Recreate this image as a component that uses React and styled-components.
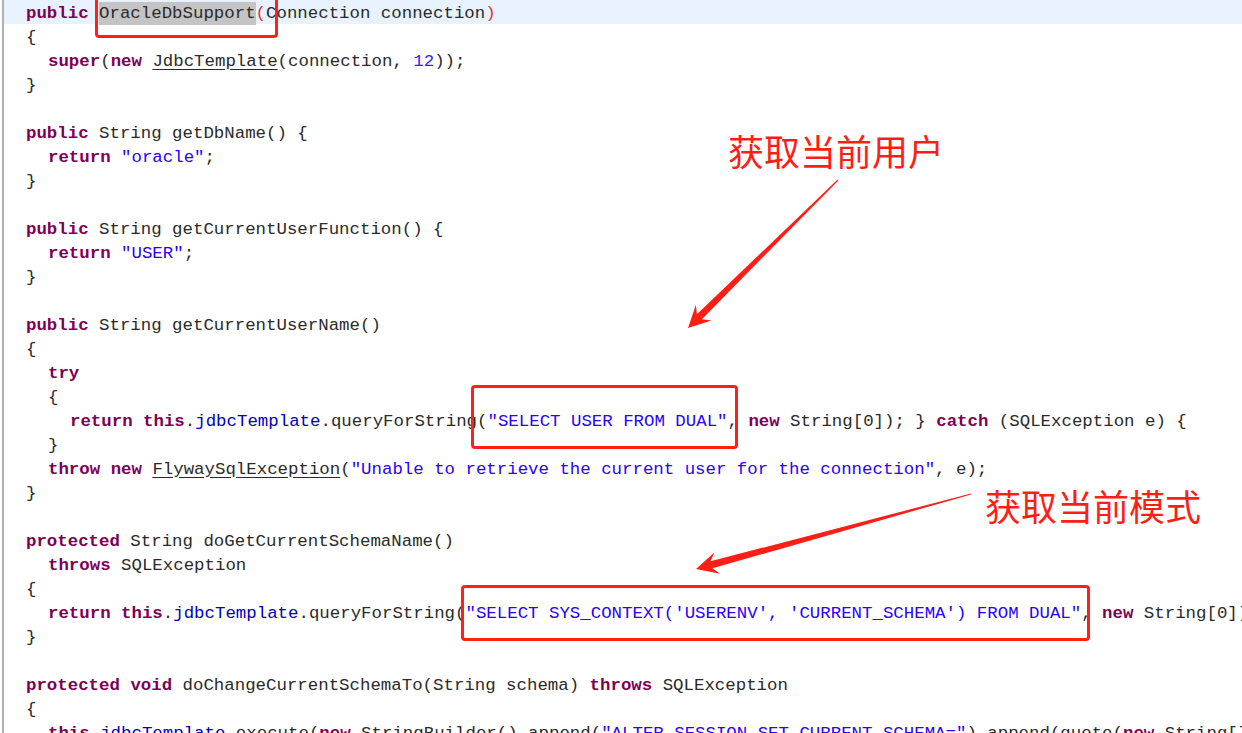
import React from "react";
import styled, { createGlobalStyle, css } from "styled-components";

const GlobalStyle = createGlobalStyle`
  html, body {
    margin: 0;
    padding: 0;
    background: #ffffff;
  }
`;

// each line: indent level + list of [kind, text]
const lines = [
  { i: 0, active: true, t: [["k", "public"], ["p", " "], ["m", "OracleDbSupport"], ["b", "("], ["p", "Connection connection"], ["b", ")"]] },
  { i: 0, t: [["p", "{"]] },
  { i: 1, t: [["k", "super"], ["p", "("], ["k", "new"], ["p", " "], ["u", "JdbcTemplate"], ["p", "(connection, "], ["n", "12"], ["p", "));"]] },
  { i: 0, t: [["p", "}"]] },
  { i: 0, t: [] },
  { i: 0, t: [["k", "public"], ["p", " String getDbName() {"]] },
  { i: 1, t: [["k", "return"], ["p", " "], ["s", "\"oracle\""], ["p", ";"]] },
  { i: 0, t: [["p", "}"]] },
  { i: 0, t: [] },
  { i: 0, t: [["k", "public"], ["p", " String getCurrentUserFunction() {"]] },
  { i: 1, t: [["k", "return"], ["p", " "], ["s", "\"USER\""], ["p", ";"]] },
  { i: 0, t: [["p", "}"]] },
  { i: 0, t: [] },
  { i: 0, t: [["k", "public"], ["p", " String getCurrentUserName()"]] },
  { i: 0, t: [["p", "{"]] },
  { i: 1, t: [["k", "try"]] },
  { i: 1, t: [["p", "{"]] },
  { i: 2, t: [["k", "return"], ["p", " "], ["k", "this"], ["p", "."], ["f", "jdbcTemplate"], ["p", ".queryForString("], ["s", "\"SELECT USER FROM DUAL\""], ["p", ", "], ["k", "new"], ["p", " String[0]); } "], ["k", "catch"], ["p", " (SQLException e) {"]] },
  { i: 1, t: [["p", "}"]] },
  { i: 1, t: [["k", "throw"], ["p", " "], ["k", "new"], ["p", " "], ["u", "FlywaySqlException"], ["p", "("], ["s", "\"Unable to retrieve the current user for the connection\""], ["p", ", e);"]] },
  { i: 0, t: [["p", "}"]] },
  { i: 0, t: [] },
  { i: 0, t: [["k", "protected"], ["p", " String doGetCurrentSchemaName()"]] },
  { i: 1, t: [["k", "throws"], ["p", " SQLException"]] },
  { i: 0, t: [["p", "{"]] },
  { i: 1, t: [["k", "return"], ["p", " "], ["k", "this"], ["p", "."], ["f", "jdbcTemplate"], ["p", ".queryForString("], ["s", "\"SELECT SYS_CONTEXT('USERENV', 'CURRENT_SCHEMA') FROM DUAL\""], ["p", ", "], ["k", "new"], ["p", " String[0]);"]] },
  { i: 0, t: [["p", "}"]] },
  { i: 0, t: [] },
  { i: 0, t: [["k", "protected"], ["p", " "], ["k", "void"], ["p", " doChangeCurrentSchemaTo(String schema) "], ["k", "throws"], ["p", " SQLException"]] },
  { i: 0, t: [["p", "{"]] },
  { i: 1, t: [["k", "this"], ["p", "."], ["f", "jdbcTemplate"], ["p", ".execute("], ["k", "new"], ["p", " StringBuilder().append("], ["s", "\"ALTER SESSION SET CURRENT_SCHEMA=\""], ["p", ").append(quote("], ["k", "new"], ["p", " String[]{schema}))"]] },
];

const boxes = [
  { x: 95, y: -6, w: 183, h: 44 },
  { x: 471, y: 385, w: 267, h: 64 },
  { x: 461, y: 585, w: 629, h: 56 },
];

const notes = [
  { x: 728, y: 127, text: "获取当前用户" },
  { x: 985, y: 482, text: "获取当前模式" },
];

const arrows = [
  { from: [838, 180], to: [688, 328] },
  { from: [971, 494], to: [696, 569] },
];

const Editor = styled.div`
  position: relative;
  width: 1242px;
  height: 733px;
  overflow: hidden;
  box-sizing: border-box;
  border-left: 2px solid #b0b0b0;
  margin-left: 2px;
  background: #ffffff;
`;

const Code = styled.div`
  display: flex;
  flex-direction: column;
  font-family: "Liberation Mono", "Courier New", monospace;
  font-size: 17.4px;
  color: #2a2a2a;
`;

const Line = styled.div`
  height: 24px;
  line-height: 28px;
  white-space: pre;
  padding-left: ${(p) => 22 + p.$indent * 22}px;
  background: ${(p) => (p.$active ? "#e8f2fe" : "transparent")};
`;

const Token = styled.span`
  ${(p) =>
    p.$kind === "k" &&
    css`
      color: #7f0055;
      font-weight: bold;
    `}
  ${(p) => p.$kind === "s" && css`color: #2a00ff;`}
  ${(p) => p.$kind === "n" && css`color: #3a1cff;`}
  ${(p) => p.$kind === "f" && css`color: #0000c0;`}
  ${(p) =>
    p.$kind === "u" &&
    css`
      text-decoration: underline;
      text-underline-offset: 3px;
    `}
  ${(p) =>
    p.$kind === "m" &&
    css`
      background: #c4c4c4;
      padding: 2px 0;
    `}
  ${(p) => p.$kind === "b" && css`color: #e83030;`}
`;

const Callout = styled.div`
  position: absolute;
  left: ${(p) => p.$x}px;
  top: ${(p) => p.$y}px;
  width: ${(p) => p.$w}px;
  height: ${(p) => p.$h}px;
  box-sizing: border-box;
  border: 3px solid #ff2118;
  border-radius: 4px;
`;

const Note = styled.div`
  position: absolute;
  left: ${(p) => p.$x}px;
  top: ${(p) => p.$y}px;
  font-family: "Noto Sans CJK SC", "Noto Sans", sans-serif;
  font-size: 36px;
  line-height: 46px;
  color: #ff1e16;
  white-space: nowrap;
`;

const Overlay = styled.svg`
  position: absolute;
  left: -4px;
  top: 0;
  pointer-events: none;
`;

// tapered arrow: hairline at the tail, wider near the head
function arrowPoints([x1, y1], [x2, y2]) {
  const dx = x2 - x1;
  const dy = y2 - y1;
  const len = Math.hypot(dx, dy);
  const ux = dx / len;
  const uy = dy / len;
  const nx = -uy;
  const ny = ux;
  const headLen = 22;
  const headHalf = 11;
  const neckHalf = 3.6;
  const bx = x2 - ux * headLen;
  const by = y2 - uy * headLen;
  const nbx = x2 - ux * (headLen - 6);
  const nby = y2 - uy * (headLen - 6);
  const pts = [
    [x1 + nx * 0.5, y1 + ny * 0.5],
    [nbx + nx * neckHalf, nby + ny * neckHalf],
    [bx + nx * headHalf, by + ny * headHalf],
    [x2, y2],
    [bx - nx * headHalf, by - ny * headHalf],
    [nbx - nx * neckHalf, nby - ny * neckHalf],
    [x1 - nx * 0.5, y1 - ny * 0.5],
  ];
  return pts.map((p) => p.map((v) => v.toFixed(1)).join(",")).join(" ");
}

const App = () => {
  return (
    <>
      <GlobalStyle />
      <Editor>
        <Code>
          {lines.map((line, idx) => (
            <Line key={idx} $indent={line.i} $active={line.active}>
              {line.t.map(([kind, text], j) => (
                <Token key={j} $kind={kind}>
                  {text}
                </Token>
              ))}
            </Line>
          ))}
        </Code>

        {boxes.map((b, idx) => (
          <Callout key={idx} $x={b.x - 4} $y={b.y} $w={b.w} $h={b.h} />
        ))}

        {notes.map((n) => (
          <Note key={n.text} $x={n.x - 4} $y={n.y}>
            {n.text}
          </Note>
        ))}

        <Overlay width="1242" height="733" viewBox="0 0 1242 733">
          {arrows.map((a, idx) => (
            <polygon key={idx} points={arrowPoints(a.from, a.to)} fill="#ff1e16" />
          ))}
        </Overlay>
      </Editor>
    </>
  );
};

export default App;
